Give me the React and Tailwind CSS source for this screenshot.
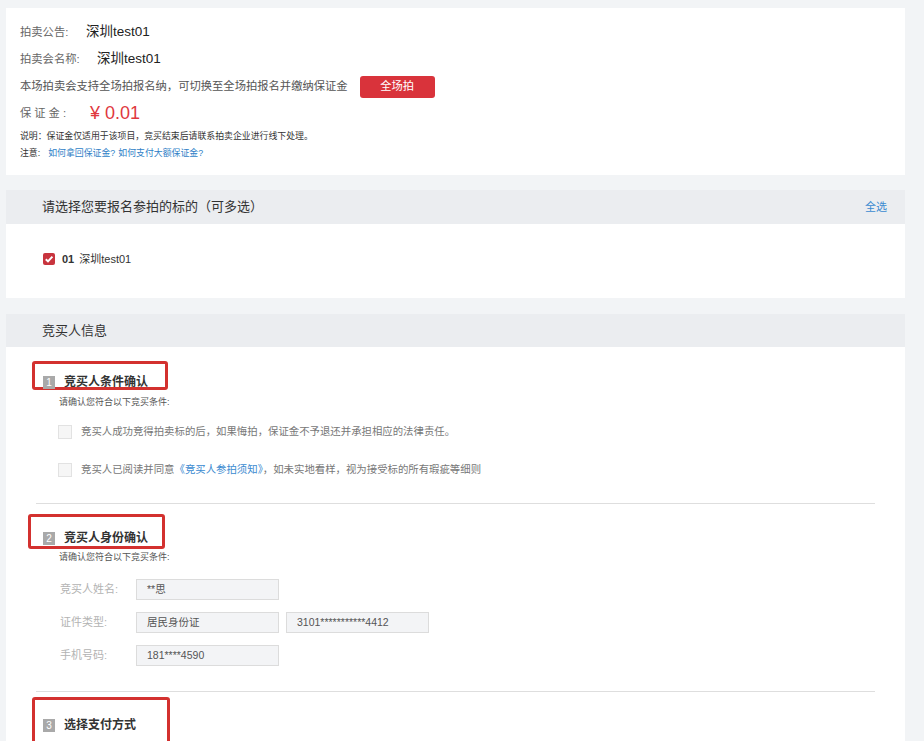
import React from "react";

const FONT = { fontFamily: '"Liberation Sans", "Noto Sans CJK SC", sans-serif' };

function NumTitle({ n, title, box }) {
  return (
    <div className={box}>
      <div className="flex items-center">
        <span className="w-[12px] h-[13px] bg-[#a9a9a9] text-white text-[10px] leading-[13px] text-center">
          {n}
        </span>
        <span className="ml-[9px] text-[12px] font-bold text-[#333] leading-[14px]">
          {title}
        </span>
      </div>
    </div>
  );
}

function Field({ label, values }) {
  return (
    <div className="flex items-center h-[21px]">
      <div className="w-[100px] pl-[24px] text-[11px] text-[#b3b3b3] shrink-0 whitespace-nowrap">
        {label}
      </div>
      <div className="flex gap-[7px]">
        {values.map((v) => (
          <div
            key={v}
            className="w-[143px] h-[21px] bg-[#f3f4f6] border border-[#dcdcdc] pl-[10px] text-[10.5px] leading-[19px] text-[#555]"
          >
            {v}
          </div>
        ))}
      </div>
    </div>
  );
}

export default function App() {
  return (
    <div className="min-h-screen bg-[#f2f4f6] pt-[8px] pb-[40px]" style={FONT}>
      {/* 拍卖信息 */}
      <div className="ml-[6px] w-[899px] bg-white pt-[11px] pb-[13px] pl-[14px]">
        <div className="flex items-center h-[27px]">
          <span className="w-[66px] text-[11.3px] text-[#666]">拍卖公告:</span>
          <span className="text-[13.5px] text-[#222]">深圳test01</span>
        </div>
        <div className="flex items-center h-[27px]">
          <span className="w-[77px] text-[11.3px] text-[#666]">拍卖会名称:</span>
          <span className="text-[13.5px] text-[#222]">深圳test01</span>
        </div>
        <div className="flex items-center h-[27px]">
          <span className="text-[11.3px] text-[#555]">
            本场拍卖会支持全场拍报名纳，可切换至全场拍报名并缴纳保证金
          </span>
          <button className="ml-[12px] w-[75px] h-[22px] rounded-[3px] bg-[#d9333b] text-white text-[11.3px]">
            全场拍
          </button>
        </div>
        <div className="flex items-center h-[27px]">
          <span className="w-[70px] text-[11.3px] text-[#666] tracking-[3px]">保证金:</span>
          <span className="text-[18px] text-[#e0383e]">¥ 0.01</span>
        </div>
        <div className="flex items-center h-[18px] mt-[1px] text-[8.9px] text-[#333]">
          说明：保证金仅适用于该项目，竞买结束后请联系拍卖企业进行线下处理。
        </div>
        <div className="flex items-center h-[16px] text-[8.9px] text-[#333]">
          <span>注意:</span>
          <span className="ml-[8px] text-[#2f7fc7]">如何拿回保证金?</span>
          <span className="ml-[3px] text-[#2f7fc7]">如何支付大额保证金?</span>
        </div>
      </div>

      {/* 标的选择 */}
      <div className="ml-[6px] w-[899px] bg-white mt-[15px]">
        <div className="h-[34px] bg-[#ebedf0] flex items-center justify-between pl-[36px] pr-[18px]">
          <span className="text-[13px] text-[#333]">请选择您要报名参拍的标的（可多选）</span>
          <span className="text-[11px] text-[#3a8ad0]">全选</span>
        </div>
        <div className="h-[74px] flex items-center pl-[37px] pb-[4px]">
          <svg width="12" height="12" viewBox="0 0 12 12">
            <rect width="12" height="12" rx="2" fill="#c8343e" />
            <path d="M2.8 6.2 L5 8.4 L9.4 3.6" stroke="#fff" strokeWidth="2" fill="none" />
          </svg>
          <span className="ml-[7px] text-[11px] font-semibold text-[#333]">01</span>
          <span className="ml-[5px] text-[11px] text-[#333]">深圳test01</span>
        </div>
      </div>

      {/* 竞买人信息 */}
      <div className="ml-[6px] w-[899px] bg-white mt-[16px] pb-[60px]">
        <div className="h-[33px] bg-[#ebedf0] flex items-center pl-[36px]">
          <span className="text-[13px] text-[#333]">竞买人信息</span>
        </div>

        <NumTitle
          n="1"
          title="竞买人条件确认"
          box="mt-[14px] ml-[26px] w-[136px] h-[29px] border-[3px] border-[#d3312f] rounded-[3px] pl-[8px] pt-[11px]"
        />
        <div className="mt-[6px] ml-[53px] text-[9px] leading-[12px] text-[#555]">
          请确认您符合以下竞买条件:
        </div>
        <div className="mt-[5px] ml-[52px]">
          {[
            <>竞买人成功竞得拍卖标的后，如果悔拍，保证金不予退还并承担相应的法律责任。</>,
            <>
              竞买人已阅读并同意
              <span className="text-[#3a8ad0]">《竞买人参拍须知》</span>
              ，如未实地看样，视为接受标的所有瑕疵等细则
            </>,
          ].map((t, i) => (
            <div key={i} className="h-[38px] flex items-center">
              <span className="w-[14px] h-[14px] border border-[#e2e2e2] bg-[#f6f6f6] shrink-0" />
              <span className="ml-[9px] text-[10.4px] text-[#777]">{t}</span>
            </div>
          ))}
        </div>
        <div className="mt-[14px] mx-[30px] h-px bg-[#dedede]" />

        <NumTitle
          n="2"
          title="竞买人身份确认"
          box="mt-[10px] ml-[22px] w-[137px] h-[35px] border-[3px] border-[#d3312f] rounded-[3px] pl-[12px] pt-[14px]"
        />
        <div className="mt-[2px] ml-[53px] text-[9px] leading-[12px] text-[#555]">
          请确认您符合以下竞买条件:
        </div>
        <div className="mt-[16px] ml-[30px] flex flex-col gap-[12px]">
          <Field label="竞买人姓名:" values={["**思"]} />
          <Field label="证件类型:" values={["居民身份证", "3101***********4412"]} />
          <Field label="手机号码:" values={["181****4590"]} />
        </div>
        <div className="mt-[25px] mx-[30px] h-px bg-[#dedede]" />

        <NumTitle
          n="3"
          title="选择支付方式"
          box="mt-[5px] ml-[26px] w-[138px] h-[52px] border-[3px] border-[#d3312f] rounded-[3px] pl-[8px] pt-[18px]"
        />
      </div>
    </div>
  );
}
